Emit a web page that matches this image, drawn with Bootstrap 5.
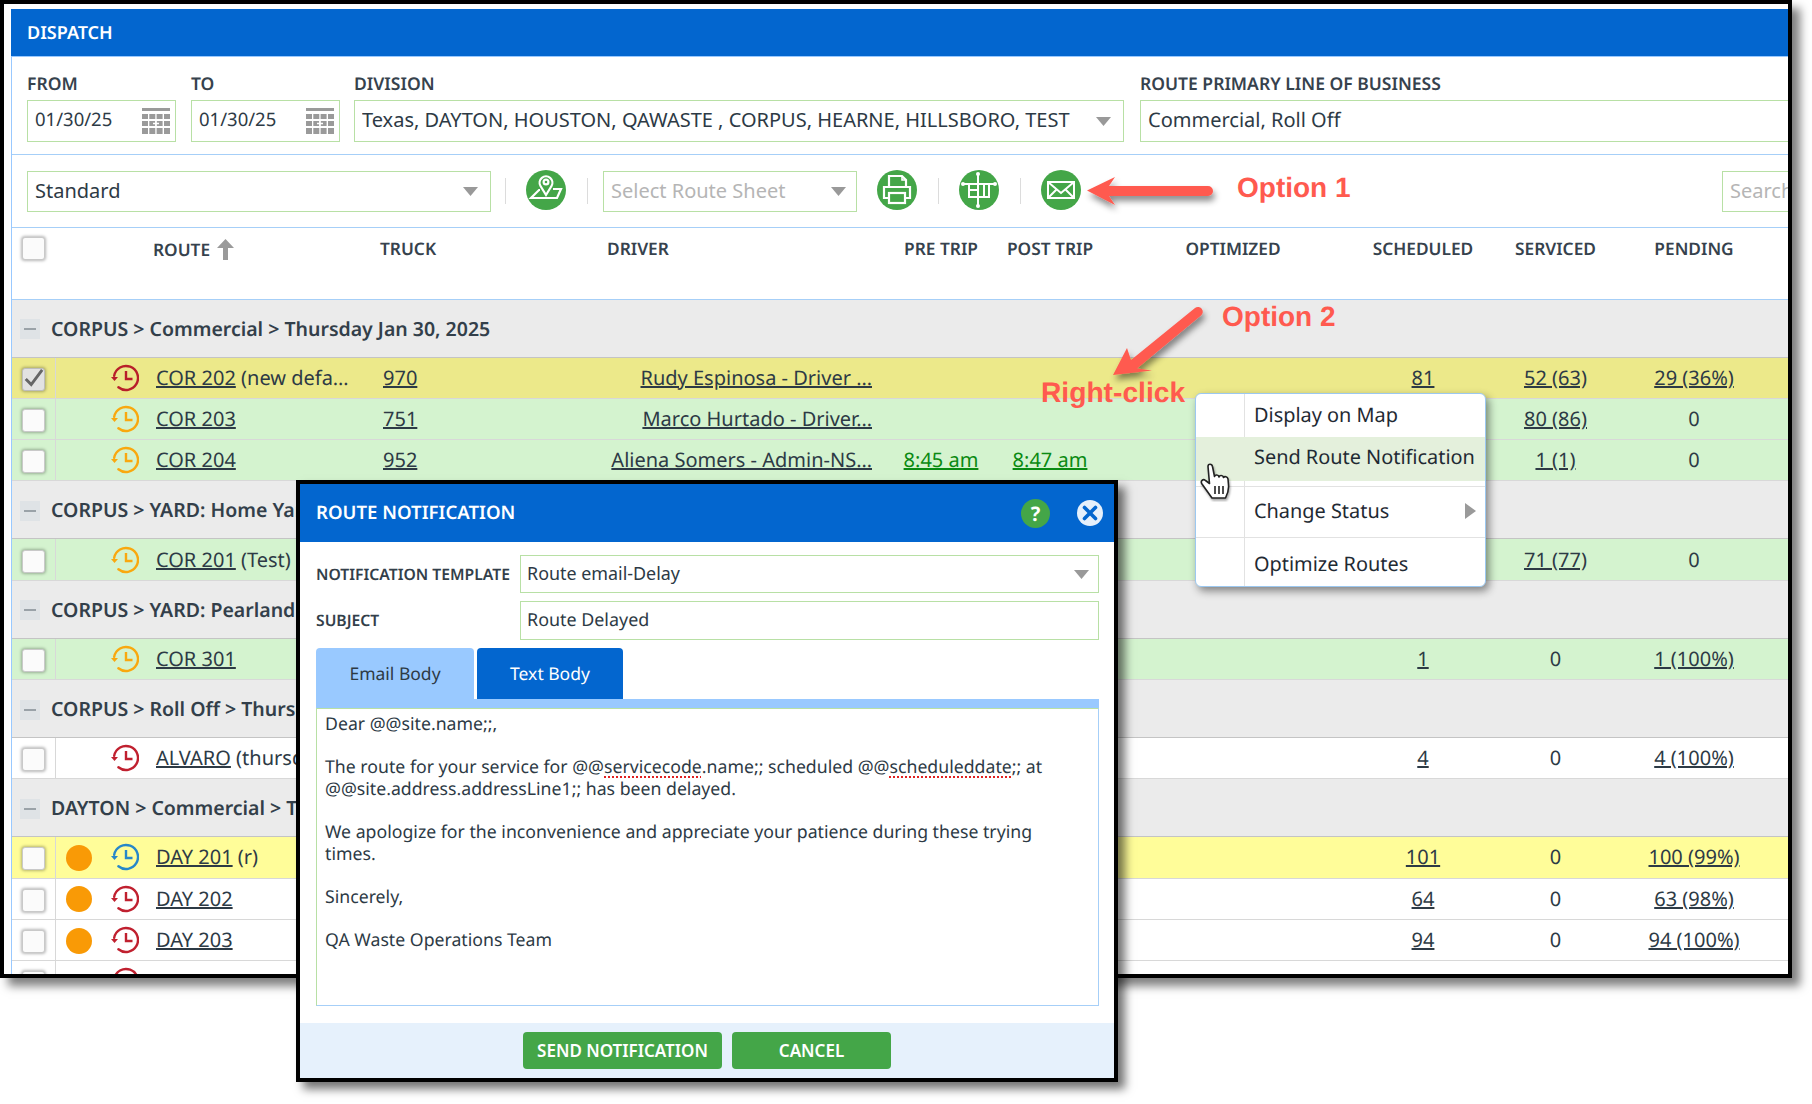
<!DOCTYPE html>
<html lang="en">
<head>
<meta charset="utf-8">
<title>Dispatch</title>
<link href="https://cdn.jsdelivr.net/npm/bootstrap@5.3.0/dist/css/bootstrap.min.css" rel="stylesheet">
<style>
html,body{margin:0;background:#fff}
body{font-family:"Noto Sans","Open Sans",sans-serif;color:#2d3a45;font-size:20px;width:1812px;height:1104px;overflow:hidden;text-rendering:geometricPrecision}
a{color:inherit}
.canvas{position:relative;width:1812px;height:1104px}
.win{width:1792px;height:978px;border:4px solid #000;padding:5px 0 0 7px;overflow:hidden;box-shadow:8px 8px 9px rgba(0,0,0,.5);background:#fff}
.panel{border-left:1px solid #99c9ff;height:100%}
.page-head{height:48px;background:#0366cf;border-bottom:1px solid #99c9ff;color:#fff;font-weight:600;font-size:18px;line-height:48px;padding-left:16px;margin-left:-1px}
.flt{height:98px;border-bottom:1px solid #a6cff8;padding:17px 0 0 15px;overflow:hidden}
.fld{flex:none}
.fld-label{display:block;font-weight:600;font-size:17.5px;line-height:20px;margin:0 0 6px;white-space:nowrap;color:#36424d}
.inp,.form-control.inp,.form-select.inp{border:1px solid #b8e0a5;border-radius:0;font-size:20px;color:#2d3a45;height:42px;padding:0 7px 2px;line-height:38px;background-color:#fff;box-shadow:none}
.form-select.inp,.form-select.mselect{background-image:url("data:image/svg+xml,%3Csvg xmlns='http://www.w3.org/2000/svg' width='15' height='9'%3E%3Cpath d='M0 0h15l-7.5 9z' fill='%23999'/%3E%3C/svg%3E");background-size:15px 9px;background-position:right 12px center;background-repeat:no-repeat}
.form-select.mselect{background-position:right 9px center}
.datebox{display:flex;align-items:center;height:42px;border:1px solid #b8e0a5;padding-left:7px;padding-right:5px}
.datebox span{flex:1;font-size:18.5px;padding-bottom:2px}
.bar2{height:73px;border-bottom:1px solid #a6cff8;padding:16px 0 0 15px;overflow:hidden}
.bar2 .inp{height:41px;line-height:37px;flex:none}
.is-ph,.form-select.is-ph{color:#b5b5b5}
.is-ph::placeholder{color:#b5b5b5;opacity:1}
.form-select.inp.is-ph{background-position:right 10px center}
.tb-sep{flex:none;width:1px;height:26px;margin:7px 20px 0 21px;background:#dcdcdc}
.tb-sep.tb-first{margin-left:14px}
.tb-sep.tb-before{margin-right:15px}
.tb-circ{flex:none;width:40px;height:40px;border-radius:50%;background:#44a648;display:block;margin-top:-1px}
.grid{table-layout:fixed;width:1776px;margin:0;--bs-table-color:#2d3a45;--bs-table-border-color:#d8d8d8;border-collapse:collapse}
.grid th,.grid td{padding:0;vertical-align:middle;white-space:nowrap;overflow:hidden}
.grid thead th{height:71px;vertical-align:top;padding-top:12px;font-size:17.3px;font-weight:600;line-height:20px;border-bottom:1px solid #a6cff8;color:#36424d;text-align:center;overflow:visible}
.grid thead th.tl{text-align:left}
.grid thead th.rt-h{padding-left:1px;padding-top:11px}
.tr-h{padding-left:8px!important}.dr-h{padding-left:7px!important}
.grid tbody tr{--bs-table-bg:#fff}
.grid tbody td{height:41.3px;line-height:24px;text-align:center;border-bottom:1px solid #d8d8d8}
.grid tbody tr.gp td{height:58px;text-align:left;font-weight:600;font-size:19.5px;border-bottom:1px solid #c4c4c4;padding:1px 0 0 8px;color:#333f4a}
.grid tbody tr.gp{--bs-table-bg:#ebebeb}
.r-sel{--bs-table-bg:#ece98a!important}
.r-ok{--bs-table-bg:#d4f3cf!important}
.r-warn{--bs-table-bg:#fffd99!important}
td.c-chk{border-right:1px solid #d8d8d8}
td.c-route{text-align:left!important;padding-left:4px!important}
td.c-truck{text-align:left!important;padding-left:11px!important}
td.c-driver{text-align:right!important;padding-right:13px!important}
.t-time{color:#0a8a12}
.minus{display:inline-block;width:20px;height:20px;background:#dfe3e6;vertical-align:middle;margin-right:11px;position:relative;top:-1px}
.minus::after{content:"";display:block;width:12px;height:2px;background:#9aa2a8;margin:9px auto 0}
.chkb,.form-check-input.chkb{width:23px;height:23px;margin:3px 0 0;border:1px solid #c9c9c9;border-radius:3px;background-color:#fbfbfb;box-shadow:0 0 3px 1px rgba(0,0,0,.28);float:none}
.form-check-input.chkb:checked{background-color:#e2e2e2;border-color:#bdbdbd;background-image:url("data:image/svg+xml,%3Csvg xmlns='http://www.w3.org/2000/svg' viewBox='0 0 23 23'%3E%3Cpath d='M3 11l6 6L21 1' fill='none' stroke='%23666' stroke-width='3.2'/%3E%3C/svg%3E");background-size:100%}
.dot{display:block;width:26px;height:26px;border-radius:50%;background:#f99a06;margin:1px 0 0 10px}
.clk{display:block;width:28px;height:28px;margin:0 auto}
.c-red{color:#c0202f}.c-org{color:#f9a80e}.c-blu{color:#2787c9}.c-dred{color:#b81f2a}

/* annotations */
.anno{position:absolute;color:#ff5a4f;font-family:"Liberation Sans",Arial,sans-serif;font-weight:700;line-height:1;white-space:nowrap}
.anno-1{left:1237px;top:174px;font-size:28px}
.anno-2{left:1222px;top:303px;font-size:28px}
.anno-3{left:1041px;top:378px;font-size:28.2px}
.anno-svg{position:absolute;left:0;top:0;pointer-events:none}

/* context menu */
.ctx.dropdown-menu{position:absolute;left:1195px;top:393px;width:291px;height:194px;padding:0;margin:0;border:1px solid #9cc8f0;border-radius:6px;box-shadow:3px 4px 8px rgba(0,0,0,.45);font-size:19.9px;display:block;background:#fff linear-gradient(#e2e2e2,#e2e2e2) 48px 0/1px 100% no-repeat;overflow:hidden}
.ctx .dropdown-item{padding:0 0 0 58px;color:#1f2a33;display:flex;align-items:center;justify-content:space-between}
.ctx .i1{height:43px;padding-bottom:2px}
.ctx .i2{height:44px;background:#e4f0dc;padding-bottom:4px}
.ctx .i3{height:51px;margin-top:5px;border-top:1px solid #e2e2e2;padding-right:9px;padding-bottom:2px}
.ctx .i4{height:49px;border-top:1px solid #e2e2e2;padding-top:3px}
.sub-arrow{width:0;height:0;border-left:11px solid #9a9a9a;border-top:8px solid transparent;border-bottom:8px solid transparent}
.hand{position:absolute;left:1199px;top:462px;z-index:1001}

/* modal */
.rn.modal-content{position:absolute;left:296px;top:480px;width:822px;height:602px;border:4px solid #000;border-radius:0;box-shadow:7px 7px 9px rgba(0,0,0,.55);background:#fff}
.rn .modal-header{height:58px;background:#0366cf;border:0;border-radius:0;padding:0 11px 0 16px;color:#fff}
.rn .modal-title{font-size:18.6px;font-weight:600;line-height:1;padding-top:1px}
.rn-help{width:29px;height:29px;border-radius:50%;background:#44a648;color:#fff;font-weight:700;font-size:20px;line-height:29px;text-align:center;margin-right:27px}
.rn-close{display:block;width:26px;height:26px}
.rn .modal-body{flex:none;height:481px;padding:13px 15px 0 16px}
.rn-lab{flex:none;width:204px;font-weight:600;font-size:15.7px;color:#333f4a;padding-top:8px;white-space:nowrap}
.form-select.mselect,.form-control.minput{border:1px solid #b8e0a5;border-radius:0;font-size:17.9px;color:#2d3a45;padding:0 6px 2px;box-shadow:none;height:38px;line-height:34px;flex:1}
.form-control.minput{height:39px;line-height:37px;padding:0 6px}
.rn-tabs.nav{height:51px;margin-top:8px;gap:3px;border:0}
.rn-tabs .nav-link{height:51px;width:158px;border:0;border-radius:4px 4px 0 0;text-align:center;font-size:17.5px;line-height:52px;padding:0;color:#fff;background:#0366cf}
.rn-tabs .nav-item+.nav-item .nav-link{width:146px}
.rn-tabs .nav-link.active{background:#99c9ff;color:#2d3a45}
.rn-bar{height:9px;background:#99c9ff}
.rn-text{height:298px;border:1px solid #a6cff8;border-left-color:#b8e0a5;border-top-color:#b8e0a5;padding:5px 8px;font-size:17.7px;line-height:21.6px;color:#2d3a45}
.rn-text p{margin:0 0 21.6px}
.spell{text-decoration:underline dotted #e02020 1.5px;text-underline-offset:3px}
.rn .modal-footer{height:55px;background:#e6f1fc;border:0;border-radius:0;padding:0;gap:10px;justify-content:center}
.rn .btn.go{margin:0;height:37px;background:#44a648;border:0;border-radius:4px;color:#fff;font-weight:600;font-size:17px;line-height:37px;padding:0}
.go-a{width:199px}.go-b{width:159px}
</style>
</head>
<body>
<svg width="0" height="0" class="d-none">
  <symbol id="clock" viewBox="0 0 28 28">
    <path d="M3.2 11.800A12 12 0 1 1 7.400 23.300" fill="none" stroke="currentColor" stroke-width="2.400" stroke-linecap="round"/>
    <path d="M0 13h7l-3.500 4z" fill="currentColor"/>
    <path d="M15 7v8h6.500" fill="none" stroke="currentColor" stroke-width="2.400"/>
  </symbol>
  <symbol id="cal" viewBox="0 0 28 26" >
    <rect width="28" height="3" fill="#9a9a9a"/>
    <g fill="#9a9a9a">
      <rect y="6" width="6" height="5"/><rect x="7.3" y="6" width="6" height="5"/><rect x="14.6" y="6" width="6" height="5"/><rect x="22" y="6" width="6" height="5"/>
      <rect y="13" width="6" height="5"/><rect x="7.3" y="13" width="6" height="5"/><rect x="14.6" y="13" width="6" height="5"/><rect x="22" y="13" width="6" height="5"/>
      <rect y="20" width="6" height="6"/><rect x="7.3" y="20" width="6" height="6"/><rect x="14.6" y="20" width="6" height="6"/><rect x="22" y="20" width="6" height="6"/>
    </g>
    <path d="M13.9 12.5v6M11 15.5h6" stroke="#fff" stroke-width="1.4"/>
  </symbol>
</svg>

<div class="canvas">
  <div class="win">
    <div class="panel">
      <div class="page-head">DISPATCH</div>

      <div class="flt d-flex">
        <div class="fld" style="width:149px">
          <label class="fld-label">FROM</label>
          <div class="datebox"><span>01/30/25</span><svg width="28" height="26"><use href="#cal"/></svg></div>
        </div>
        <div class="fld" style="width:149px;margin-left:15px">
          <label class="fld-label">TO</label>
          <div class="datebox"><span>01/30/25</span><svg width="28" height="26"><use href="#cal"/></svg></div>
        </div>
        <div class="fld" style="width:770px;margin-left:14px">
          <label class="fld-label">DIVISION</label>
          <select class="form-select inp"><option>Texas, DAYTON, HOUSTON, QAWASTE , CORPUS, HEARNE, HILLSBORO, TEST</option></select>
        </div>
        <div class="fld ms-3" style="width:700px">
          <label class="fld-label">ROUTE PRIMARY LINE OF BUSINESS</label>
          <div class="inp">Commercial, Roll Off</div>
        </div>
      </div>

      <div class="bar2 d-flex">
        <select class="form-select inp" style="width:464px"><option>Standard</option></select>
        <span class="tb-sep tb-first"></span>
        <svg class="tb-circ" viewBox="0 0 40 40" fill="none" stroke="#fff" stroke-width="2.2">
          <path d="M14 20h-1L5 28h26l4-9H27"/>
          <path d="M20 25l-5.5-9a6.4 6.4 0 1 1 11 0z" fill="#44a648"/>
          <circle cx="20" cy="12" r="2.4"/>
        </svg>
        <span class="tb-sep tb-before"></span>
        <select class="form-select inp is-ph" style="width:254px;margin-right:20px"><option>Select Route Sheet</option></select>
        <svg class="tb-circ" viewBox="0 0 40 40" fill="none" stroke="#fff" stroke-width="2.2">
          <path d="M12 17V6h13l4 4v7"/>
          <path d="M25 6v4h4" stroke-width="1.6"/>
          <path d="M12 28H7V17h26v11h-5"/>
          <rect x="12" y="23" width="16" height="10"/>
        </svg>
        <span class="tb-sep"></span>
        <svg class="tb-circ" viewBox="0 0 40 40" fill="none" stroke="#fff" stroke-width="2">
          <path d="M19 3v34M3 14h34"/>
          <path d="M10 14v13h20V14M10 20h9M25 14v13"/>
          <g fill="#fff" stroke="none"><circle cx="19" cy="4" r="2"/><circle cx="19" cy="36" r="2"/><circle cx="4" cy="14" r="2"/><circle cx="36" cy="14" r="2"/></g>
        </svg>
        <span class="tb-sep"></span>
        <svg class="tb-circ" viewBox="0 0 40 40" fill="none" stroke="#fff" stroke-width="2">
          <rect x="7" y="12" width="26" height="16"/>
          <path d="M7 12l13 11 13-11M7 28l9-9M33 28l-9-9"/>
        </svg>
        <input class="form-control inp is-ph" style="width:120px;margin-left:641px" placeholder="Search">
      </div>

      <table class="table grid">
        <colgroup>
          <col style="width:43px"><col style="width:43px"><col style="width:54px"><col style="width:220px"><col style="width:228px"><col style="width:285px"><col style="width:112px"><col style="width:106px"><col style="width:260px"><col style="width:120px"><col style="width:145px"><col style="width:132px"><col style="width:28px">
        </colgroup>
        <thead>
          <tr>
            <th style="padding-top:9px"><input class="form-check-input chkb" type="checkbox" aria-label="Select all" style="margin-top:0"></th>
            <th></th><th></th>
            <th class="tl rt-h">ROUTE <svg width="17" height="21" viewBox="0 0 17 21" style="vertical-align:-4px;margin-left:2px"><path d="M8.5 0L17 9h-6v12H6V9H0z" fill="#9a9a9a"/></svg></th>
            <th class="tl tr-h">TRUCK</th>
            <th class="tl dr-h">DRIVER</th>
            <th>PRE TRIP</th>
            <th>POST TRIP</th>
            <th>OPTIMIZED</th>
            <th>SCHEDULED</th>
            <th>SERVICED</th>
            <th>PENDING</th>
            <th></th>
          </tr>
        </thead>
        <tbody>
          <tr class="gp"><td colspan="13"><span class="minus"></span>CORPUS &gt; Commercial &gt; Thursday Jan 30, 2025</td></tr>
          <tr class="r-sel">
            <td class="c-chk"><input class="form-check-input chkb" type="checkbox" checked aria-label="Select row"></td><td></td>
            <td><svg class="clk c-dred"><use href="#clock"/></svg></td>
            <td class="c-route"><a href="#">COR 202</a> (new defa…</td>
            <td class="c-truck"><a href="#">970</a></td>
            <td class="c-driver"><a href="#">Rudy Espinosa - Driver …</a></td>
            <td></td><td></td><td></td>
            <td><a href="#">81</a></td><td><a href="#">52 (63)</a></td><td><a href="#">29 (36%)</a></td><td></td>
          </tr>
          <tr class="r-ok">
            <td class="c-chk"><input class="form-check-input chkb" type="checkbox" aria-label="Select row"></td><td></td>
            <td><svg class="clk c-org"><use href="#clock"/></svg></td>
            <td class="c-route"><a href="#">COR 203</a></td>
            <td class="c-truck"><a href="#">751</a></td>
            <td class="c-driver"><a href="#">Marco Hurtado - Driver…</a></td>
            <td></td><td></td><td></td>
            <td></td><td><a href="#">80 (86)</a></td><td>0</td><td></td>
          </tr>
          <tr class="r-ok">
            <td class="c-chk"><input class="form-check-input chkb" type="checkbox" aria-label="Select row"></td><td></td>
            <td><svg class="clk c-org"><use href="#clock"/></svg></td>
            <td class="c-route"><a href="#">COR 204</a></td>
            <td class="c-truck"><a href="#">952</a></td>
            <td class="c-driver"><a href="#">Aliena Somers - Admin-NS…</a></td>
            <td><a href="#" class="t-time">8:45 am</a></td><td><a href="#" class="t-time">8:47 am</a></td><td></td>
            <td></td><td><a href="#">1 (1)</a></td><td>0</td><td></td>
          </tr>
          <tr class="gp"><td colspan="13"><span class="minus"></span>CORPUS &gt; YARD: Home Yard</td></tr>
          <tr class="r-ok">
            <td class="c-chk"><input class="form-check-input chkb" type="checkbox" aria-label="Select row"></td><td></td>
            <td><svg class="clk c-org"><use href="#clock"/></svg></td>
            <td class="c-route"><a href="#">COR 201</a> (Test)</td>
            <td></td><td></td><td></td><td></td><td></td>
            <td></td><td><a href="#">71 (77)</a></td><td>0</td><td></td>
          </tr>
          <tr class="gp"><td colspan="13"><span class="minus"></span>CORPUS &gt; YARD: Pearland</td></tr>
          <tr class="r-ok">
            <td class="c-chk"><input class="form-check-input chkb" type="checkbox" aria-label="Select row"></td><td></td>
            <td><svg class="clk c-org"><use href="#clock"/></svg></td>
            <td class="c-route"><a href="#">COR 301</a></td>
            <td></td><td></td><td></td><td></td><td></td>
            <td><a href="#">1</a></td><td>0</td><td><a href="#">1 (100%)</a></td><td></td>
          </tr>
          <tr class="gp"><td colspan="13"><span class="minus"></span>CORPUS &gt; Roll Off &gt; Thursday</td></tr>
          <tr>
            <td class="c-chk"><input class="form-check-input chkb" type="checkbox" aria-label="Select row"></td><td></td>
            <td><svg class="clk c-red"><use href="#clock"/></svg></td>
            <td class="c-route"><a href="#">ALVARO</a> (thursday)</td>
            <td></td><td></td><td></td><td></td><td></td>
            <td><a href="#">4</a></td><td>0</td><td><a href="#">4 (100%)</a></td><td></td>
          </tr>
          <tr class="gp"><td colspan="13"><span class="minus"></span>DAYTON &gt; Commercial &gt; Thursday</td></tr>
          <tr class="r-warn">
            <td class="c-chk"><input class="form-check-input chkb" type="checkbox" aria-label="Select row"></td><td><span class="dot"></span></td>
            <td><svg class="clk c-blu"><use href="#clock"/></svg></td>
            <td class="c-route"><a href="#">DAY 201</a> (r)</td>
            <td></td><td></td><td></td><td></td><td></td>
            <td><a href="#">101</a></td><td>0</td><td><a href="#">100 (99%)</a></td><td></td>
          </tr>
          <tr>
            <td class="c-chk"><input class="form-check-input chkb" type="checkbox" aria-label="Select row"></td><td><span class="dot"></span></td>
            <td><svg class="clk c-red"><use href="#clock"/></svg></td>
            <td class="c-route"><a href="#">DAY 202</a></td>
            <td></td><td></td><td></td><td></td><td></td>
            <td><a href="#">64</a></td><td>0</td><td><a href="#">63 (98%)</a></td><td></td>
          </tr>
          <tr>
            <td class="c-chk"><input class="form-check-input chkb" type="checkbox" aria-label="Select row"></td><td><span class="dot"></span></td>
            <td><svg class="clk c-red"><use href="#clock"/></svg></td>
            <td class="c-route"><a href="#">DAY 203</a></td>
            <td></td><td></td><td></td><td></td><td></td>
            <td><a href="#">94</a></td><td>0</td><td><a href="#">94 (100%)</a></td><td></td>
          </tr>
          <tr>
            <td class="c-chk"><input class="form-check-input chkb" type="checkbox" aria-label="Select row"></td><td></td>
            <td><svg class="clk c-red"><use href="#clock"/></svg></td>
            <td class="c-route"></td>
            <td></td><td></td><td></td><td></td><td></td>
            <td></td><td></td><td></td><td></td>
          </tr>
        </tbody>
      </table>
    </div>
  </div>

  <!-- callouts over the screenshot -->
  <svg class="anno-svg" width="1812" height="1104" aria-hidden="true">
    <defs><filter id="sh" x="-20%" y="-40%" width="150%" height="200%"><feDropShadow dx="2" dy="5" stdDeviation="3" flood-color="#000" flood-opacity=".45"/></filter></defs>
    <g filter="url(#sh)" fill="#ff5a4f">
      <path d="M1087 190.500L1115 177l-6 9h99a5 5 0 0 1 0 10h-99l6 9z"/>
      <path d="M1113 375l14-27 4 12 64-52a4.800 4.800 0 0 1 6 7.500l-64 53 15 2z"/>
    </g>
  </svg>
  <span class="anno anno-1">Option 1</span>
  <span class="anno anno-2">Option 2</span>
  <span class="anno anno-3">Right-click</span>

  <ul class="dropdown-menu show ctx">
    <li><a class="dropdown-item i1" href="#">Display on Map</a></li>
    <li><a class="dropdown-item i2" href="#">Send Route Notification</a></li>
    <li><a class="dropdown-item i3" href="#">Change Status <span class="sub-arrow"></span></a></li>
    <li><a class="dropdown-item i4" href="#">Optimize Routes</a></li>
  </ul>
  <svg class="hand" width="36" height="40" viewBox="0 0 36 40" aria-hidden="true">
    <path d="M9 4.500c0-3 4-3 4.500 0l2 10c.5-2 4-2 4.500 .5 .5-2 4-2 4.500 .5 1-1.500 4-1 4.500 1.500l.5 6c.5 5-1 9-3 13H13L3 22c-2-3 1-5.500 3.500-3.500l4 3z" fill="#fff" stroke="#222" stroke-width="1.600" stroke-linejoin="round" style="filter:drop-shadow(1px 2px 1px rgba(0,0,0,.35))"/>
    <path d="M16 24v8M20 24v8M24 24v8" stroke="#222" stroke-width="1.600"/>
  </svg>

  <div class="modal-content rn">
    <div class="modal-header">
      <h5 class="modal-title flex-grow-1">ROUTE NOTIFICATION</h5>
      <span class="rn-help">?</span>
      <svg class="rn-close" viewBox="0 0 26 26" aria-label="Close"><circle cx="13" cy="13" r="13" fill="#e6f0fb"/><path d="M7.500 7.500l11 11M18.500 7.500l-11 11" stroke="#0366cf" stroke-width="3.600" stroke-linecap="round"/></svg>
    </div>
    <div class="modal-body">
      <div class="d-flex">
        <label class="rn-lab">NOTIFICATION TEMPLATE</label>
        <select class="form-select mselect"><option>Route email-Delay</option></select>
      </div>
      <div class="d-flex mt-2">
        <label class="rn-lab">SUBJECT</label>
        <div class="form-control minput">Route Delayed</div>
      </div>
      <ul class="nav rn-tabs">
        <li class="nav-item"><a class="nav-link active" href="#">Email Body</a></li>
        <li class="nav-item"><a class="nav-link" href="#">Text Body</a></li>
      </ul>
      <div class="rn-bar"></div>
      <div class="rn-text">
        <p>Dear @@site.name;;,</p>
        <p>The route for your service for @@<span class="spell">servicecode</span>.name;; scheduled @@<span class="spell">scheduleddate</span>;; at<br>@@site.address.addressLine1;; has been delayed.</p>
        <p>We apologize for the inconvenience and appreciate your patience during these trying<br>times.</p>
        <p>Sincerely,</p>
        <p>QA Waste Operations Team</p>
      </div>
    </div>
    <div class="modal-footer">
      <button type="button" class="btn go go-a">SEND NOTIFICATION</button>
      <button type="button" class="btn go go-b">CANCEL</button>
    </div>
  </div>
</div>
<script src="https://cdn.jsdelivr.net/npm/bootstrap@5.3.0/dist/js/bootstrap.bundle.min.js"></script>
</body>
</html>
